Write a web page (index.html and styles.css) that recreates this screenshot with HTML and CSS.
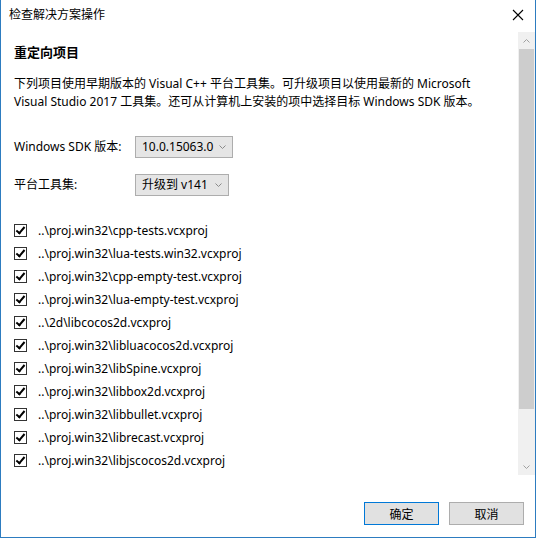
FILE: index.html
```html
<!DOCTYPE html>
<html lang="zh-CN">
<head>
<meta charset="utf-8">
<title>检查解决方案操作</title>
<link rel="stylesheet" href="styles.css">
</head>
<body>
<div class="window">
  <div class="titlebar">
    <span class="title">检查解决方案操作</span>
    <span class="close">
      <svg width="12" height="12" viewBox="0 0 12 12"><path d="M1 1L11 11M11 1L1 11" stroke="#000" stroke-width="1.1" fill="none"/></svg>
    </span>
  </div>
  <div class="body">
    <div class="main">
      <h1 class="heading">重定向项目</h1>
      <p class="desc">下列项目使用早期版本的 Visual C++ 平台工具集。可升级项目以使用最新的 Microsoft<br>Visual Studio 2017 工具集。还可从计算机上安装的项中选择目标 Windows SDK 版本。</p>
      <div class="field">
        <span class="label">Windows SDK 版本:</span>
        <span class="select sel-sdk"><span class="val">10.0.15063.0</span><svg class="caret" width="7" height="4" viewBox="0 0 7 4"><path d="M0.5 0.5L3.5 3.5L6.5 0.5" stroke="#8a8a8a" fill="none"/></svg></span>
      </div>
      <div class="field">
        <span class="label">平台工具集:</span>
        <span class="select sel-tool"><span class="val">升级到 v141</span><svg class="caret" width="7" height="4" viewBox="0 0 7 4"><path d="M0.5 0.5L3.5 3.5L6.5 0.5" stroke="#8a8a8a" fill="none"/></svg></span>
      </div>
      <ul class="list">
        <li><span class="cb"></span>..\proj.win32\cpp-tests.vcxproj</li>
        <li><span class="cb"></span>..\proj.win32\lua-tests.win32.vcxproj</li>
        <li><span class="cb"></span>..\proj.win32\cpp-empty-test.vcxproj</li>
        <li><span class="cb"></span>..\proj.win32\lua-empty-test.vcxproj</li>
        <li><span class="cb"></span>..\2d\libcocos2d.vcxproj</li>
        <li><span class="cb"></span>..\proj.win32\libluacocos2d.vcxproj</li>
        <li><span class="cb"></span>..\proj.win32\libSpine.vcxproj</li>
        <li><span class="cb"></span>..\proj.win32\libbox2d.vcxproj</li>
        <li><span class="cb"></span>..\proj.win32\libbullet.vcxproj</li>
        <li><span class="cb"></span>..\proj.win32\librecast.vcxproj</li>
        <li><span class="cb"></span>..\proj.win32\libjscocos2d.vcxproj</li>
      </ul>
    </div>
    <div class="scrollbar">
      <div class="arrow"><svg width="7" height="4" viewBox="0 0 7 4"><path d="M0.5 3.5L3.5 0.5L6.5 3.5" stroke="#a0a0a0" fill="none"/></svg></div>
      <div class="track"><div class="thumb"></div></div>
      <div class="arrow"><svg width="7" height="4" viewBox="0 0 7 4"><path d="M0.5 0.5L3.5 3.5L6.5 0.5" stroke="#a0a0a0" fill="none"/></svg></div>
    </div>
  </div>
  <div class="footer">
    <button class="btn btn-default">确定</button>
    <button class="btn">取消</button>
  </div>
</div>
</body>
</html>
```

FILE: styles.css
```css
html, body {
  margin: 0;
  padding: 0;
  background: #ffffff;
}
body {
  font-family: "Noto Sans", "Noto Sans CJK SC", sans-serif;
  font-size: 12px;
  color: #000;
}
.window {
  width: 536px;
  height: 538px;
  box-sizing: border-box;
  border: 1px solid #2d7cc0;
  border-top: none;
  display: flex;
  flex-direction: column;
  background: #fff;
}
.titlebar {
  height: 30px;
  display: flex;
  align-items: center;
  justify-content: space-between;
  padding-left: 8px;
  flex: none;
}
.title {
  font-size: 12px;
  line-height: 16px;
}
.close {
  width: 34px;
  height: 30px;
  display: flex;
  align-items: center;
  justify-content: center;
}
.body {
  flex: 1;
  display: flex;
  min-height: 0;
}
.main {
  flex: 1;
  padding-left: 13px;
  padding-top: 13px;
}
.heading {
  margin: 0;
  font-size: 13px;
  font-weight: bold;
  line-height: 18px;
}
.desc {
  margin: 14px 0 0 0;
  line-height: 18px;
}
.field {
  display: flex;
  align-items: center;
  margin-top: 25px;
}
.field + .field {
  margin-top: 16px;
}
.label {
  width: 121px;
  line-height: 16px;
}
.select {
  display: flex;
  align-items: center;
  justify-content: space-between;
  height: 22px;
  box-sizing: border-box;
  border: 1px solid #adadad;
  background: #e5e5e5;
  padding: 0 6px 0 6px;
  font-size: 12px;
  white-space: nowrap;
}
.val {
  line-height: 16px;
}
.sel-sdk { width: 98px; }
.sel-tool { width: 94px; }
.caret { margin-left: 4px; flex: none; }
.list {
  list-style: none;
  margin: 23px 0 0 0;
  padding: 0;
}
.list li {
  display: flex;
  align-items: center;
  height: 23px;
  line-height: 16px;
}
.cb {
  width: 13px;
  height: 13px;
  box-sizing: border-box;
  border: 1px solid #333;
  background: #fff;
  margin-right: 11px;
  position: relative;
  flex: none;
}
.cb::after {
  content: "";
  position: absolute;
  left: 3px;
  top: 0px;
  width: 3px;
  height: 7px;
  border: solid #000;
  border-width: 0 2px 2px 0;
  transform: rotate(40deg);
}
.scrollbar {
  width: 17px;
  margin-top: 2px;
  margin-bottom: 27px;
  background: #f0f0f0;
  display: flex;
  flex-direction: column;
}
.arrow {
  height: 17px;
  display: flex;
  align-items: center;
  justify-content: center;
  flex: none;
}
.track {
  flex: 1;
  padding: 0 1px;
}
.thumb {
  height: 360px;
  background: #cdcdcd;
}
.footer {
  height: 35px;
  flex: none;
  display: flex;
  justify-content: flex-end;
  align-items: flex-start;
  gap: 10px;
  padding: 0 11px 0 0;
}
.btn {
  width: 75px;
  height: 23px;
  box-sizing: border-box;
  border: 1px solid #adadad;
  background: #e1e1e1;
  font-family: "Noto Sans CJK SC", sans-serif;
  font-size: 12px;
  padding: 0;
  margin: 0;
}
.btn-default {
  border-color: #0078d7;
}
```
